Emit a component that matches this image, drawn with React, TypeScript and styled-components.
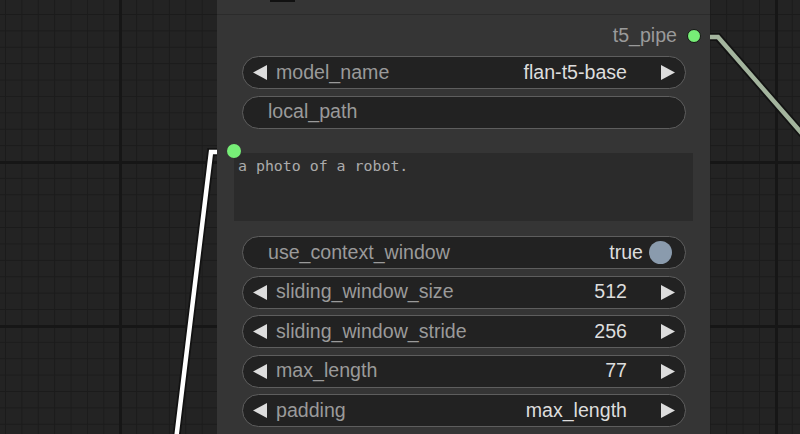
import styled, { createGlobalStyle } from "styled-components";

const GlobalStyle = createGlobalStyle`
  html, body {
    margin: 0;
    padding: 0;
    background: #222222;
  }
  * {
    box-sizing: border-box;
  }
`;

const Canvas = styled.div`
  position: relative;
  width: 800px;
  height: 434px;
  overflow: hidden;
  font-family: "Liberation Sans", Arial, sans-serif;
  background-color: #232323;
  background-image:
    linear-gradient(to right, #161616 3px, transparent 3px),
    linear-gradient(to bottom, #161616 3px, transparent 3px),
    linear-gradient(to right, #1b1b1b 1px, transparent 1px),
    linear-gradient(to bottom, #1b1b1b 1px, transparent 1px);
  background-size: 164px 100%, 100% 164px, 16.4px 100%, 100% 16.4px;
  background-position: 119px 0, 0 161px, 5px 0, 0 14px;
`;

const Wires = styled.svg`
  position: absolute;
  left: 0;
  top: 0;
  width: 800px;
  height: 434px;
`;

const Node = styled.div`
  position: absolute;
  left: 217px;
  top: -20px;
  width: 493px;
  background: #353535;
  display: flex;
  flex-direction: column;
  padding-bottom: 20px;
`;

const Title = styled.div`
  height: 35px;
  border-bottom: 1px solid #2b2b2b;
  display: flex;
  align-items: flex-start;
`;

const TitleMark = styled.div`
  margin-left: 53px;
  margin-top: 20px;
  width: 25px;
  height: 2px;
  background: #111111;
`;

const OutputRow = styled.div`
  height: 41px;
  display: flex;
  align-items: center;
  justify-content: flex-end;
  padding-right: 9px;
  gap: 10px;
  font-size: 19.6px;
  color: #9a9a9a;
`;

const SlotDot = styled.div<{ $outlined?: boolean }>`
  width: 14px;
  height: 14px;
  border-radius: 50%;
  background: #77ee77;
  border: ${(p) => (p.$outlined ? "1.5px solid #151515" : "none")};
`;

const Widgets = styled.div`
  display: flex;
  flex-direction: column;
  gap: 6.5px;
  padding: 0 24px 0 25px;
`;

const Pill = styled.div<{ $pad: number }>`
  height: 33px;
  border-radius: 17px;
  border: 1.5px solid #5e5e5e;
  background: #222222;
  display: flex;
  align-items: center;
  padding: 0 ${(p) => p.$pad}px 0 10px;
  font-size: 19.6px;
  line-height: 1;
`;

const Label = styled.span<{ $indent: number }>`
  color: #9a9a9a;
  margin-left: ${(p) => p.$indent}px;
  flex: 1;
  white-space: nowrap;
`;

const Value = styled.span<{ $gap: number }>`
  color: #dddddd;
  margin-right: ${(p) => p.$gap}px;
  white-space: nowrap;
`;

const Toggle = styled.div`
  width: 23px;
  height: 23px;
  border-radius: 50%;
  background: #8a9bad;
`;

const PromptBox = styled.div`
  position: relative;
  margin: 24.5px 17px 15px 17px;
  height: 68px;
`;

const Prompt = styled.textarea`
  display: block;
  width: 100%;
  height: 100%;
  resize: none;
  border: none;
  outline: none;
  background: #2b2b2b;
  color: #ababab;
  font-family: "DejaVu Sans Mono", "Liberation Mono", monospace;
  font-size: 14.9px;
  line-height: 17px;
  padding: 5px 4px;
  margin: 0;
`;

const InputDot = styled(SlotDot)`
  position: absolute;
  left: -7px;
  top: -9px;
`;

const Arrow = ({ dir }: { dir: "left" | "right" }) => (
  <svg width="14" height="15" viewBox="0 0 14 15" style={{ flex: "none" }}>
    <polygon
      points={dir === "left" ? "14,0 14,15 0,7.5" : "0,0 0,15 14,7.5"}
      fill="#dddddd"
    />
  </svg>
);

type WidgetProps = {
  kind: "combo" | "text" | "toggle" | "blank";
  label?: string;
  value?: string;
};

function Widget({ kind, label, value }: WidgetProps) {
  if (kind === "combo") {
    return (
      <Pill $pad={10}>
        <Arrow dir="left" />
        <Label $indent={9}>{label}</Label>
        <Value $gap={34}>{value}</Value>
        <Arrow dir="right" />
      </Pill>
    );
  }
  if (kind === "toggle") {
    return (
      <Pill $pad={13}>
        <Label $indent={15}>{label}</Label>
        <Value $gap={6}>{value}</Value>
        <Toggle />
      </Pill>
    );
  }
  return (
    <Pill $pad={10}>
      <Label $indent={15}>{label}</Label>
    </Pill>
  );
}

const RIGHT_WIRE = "M 705 37 L 718 37 L 805 137";
const LEFT_WIRE = "M 222 152 L 211 152 L 176 440";

export default function App() {
  return (
    <>
      <GlobalStyle />
      <Canvas>
        <Wires viewBox="0 0 800 434">
          <path d={RIGHT_WIRE} fill="none" stroke="#121212" strokeWidth="8" />
          <path d={RIGHT_WIRE} fill="none" stroke="#a4b59e" strokeWidth="4.5" />
          <path d={LEFT_WIRE} fill="none" stroke="#121212" strokeWidth="8" />
          <path d={LEFT_WIRE} fill="none" stroke="#ffffff" strokeWidth="4.5" />
        </Wires>
        <Node>
          <Title>
            <TitleMark />
          </Title>
          <OutputRow>
            <span>t5_pipe</span>
            <SlotDot $outlined />
          </OutputRow>
          <Widgets>
            <Widget kind="combo" label="model_name" value="flan-t5-base" />
            <Widget kind="text" label="local_path" />
          </Widgets>
          <PromptBox>
            <Prompt readOnly value="a photo of a robot." />
            <InputDot />
          </PromptBox>
          <Widgets>
            <Widget kind="toggle" label="use_context_window" value="true" />
            <Widget kind="combo" label="sliding_window_size" value="512" />
            <Widget kind="combo" label="sliding_window_stride" value="256" />
            <Widget kind="combo" label="max_length" value="77" />
            <Widget kind="combo" label="padding" value="max_length" />
            <Widget kind="blank" />
          </Widgets>
        </Node>
      </Canvas>
    </>
  );
}
